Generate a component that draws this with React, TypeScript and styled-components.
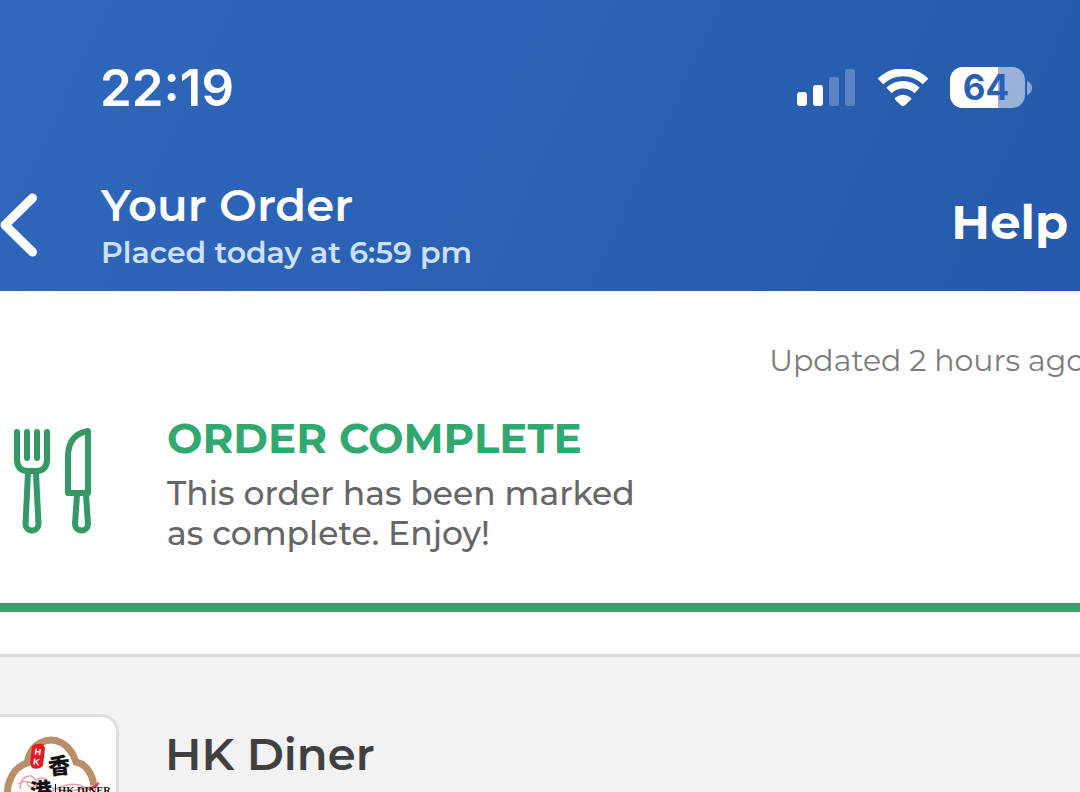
import React from "react";
import styled, { createGlobalStyle } from "styled-components";

const GlobalStyle = createGlobalStyle`
  * { box-sizing: border-box; }
  html, body { margin: 0; padding: 0; }
  body { font-family: Montserrat, Inter, "Noto Sans", sans-serif; background: #f2f2f2; }
  h1, h2, p { margin: 0; }
`;

const Screen = styled.div`
  display: flex;
  flex-direction: column;
  height: 100vh;
  overflow: hidden;
`;

const Header = styled.header`
  flex: none;
  color: #fff;
  background: linear-gradient(115deg, #2f67bc 0%, #2a61b3 50%, #265aaa 100%);
`;

const StatusBar = styled.div`
  display: flex;
  align-items: center;
  justify-content: space-between;
  height: 176px;
  padding: 0 48px 0 100px;
`;

const Clock = styled.time`
  font: 600 51px/60px Inter, sans-serif;
`;

const StatusIcons = styled.div`
  display: flex;
  align-items: center;
  gap: 22px;
`;

const NavBar = styled.nav`
  display: flex;
  align-items: flex-start;
  height: 115px;
  padding: 4px 12px 0 0;
`;

const BackButton = styled.button`
  width: 101px;
  height: 90px;
  padding: 0;
  border: 0;
  background: none;
  text-align: left;
  cursor: pointer;
  svg { display: block; }
`;

const Titles = styled.div`
  flex: 1;
  white-space: nowrap;
`;

const Title = styled.h1`
  font-size: 45px;
  font-weight: 600;
  line-height: 50px;
`;

const Placed = styled.p`
  font-size: 30px;
  font-weight: 600;
  line-height: 46px;
  color: #cfe0fc;
`;

const HelpButton = styled.button`
  padding: 12px 0;
  border: 0;
  background: none;
  color: #fff;
  font: inherit;
  font-size: 48px;
  font-weight: 700;
  line-height: 60px;
  cursor: pointer;
`;

const Content = styled.main`
  display: flex;
  flex: 1;
  flex-direction: column;
  min-height: 0;
`;

const Status = styled.section`
  flex: none;
  padding: 50px 0;
  background: #fff;
  border-bottom: 9px solid #31a86f;
`;

const Updated = styled.p`
  margin-right: -5px;
  text-align: right;
  font-size: 30px;
  font-weight: 400;
  line-height: 40px;
  white-space: nowrap;
  color: #7c7c7c;
`;

const StatusRow = styled.div`
  display: flex;
  align-items: center;
  margin-top: 28px;
`;

const IconColumn = styled.div`
  flex: none;
  width: 167px;
  svg { display: block; }
`;

const StatusTitle = styled.h2`
  font-size: 42px;
  font-weight: 700;
  line-height: 58px;
  color: #31a86f;
`;

const StatusText = styled.p`
  margin-top: 6px;
  font-size: 33px;
  font-weight: 500;
  line-height: 40px;
  color: #666;
`;

const Spacer = styled.div`
  flex: none;
  height: 42px;
  background: #fff;
`;

const Restaurant = styled.section`
  display: flex;
  flex: 1;
  align-items: flex-start;
  min-height: 0;
  padding-top: 57px;
  border-top: 3px solid #dadada;
  background: #f2f2f2;
`;

const LogoCard = styled.div`
  flex: none;
  width: 119px;
  height: 160px;
  border: 3px solid #dedede;
  border-left: 0;
  border-radius: 0 18px 18px 0;
  background: #fff;
  overflow: hidden;
  svg { display: block; }
`;

const RestaurantName = styled.h2`
  padding: 12px 0 0 46px;
  font-size: 45px;
  font-weight: 600;
  line-height: 56px;
  color: #404040;
`;

const SignalIcon = () => (
  <svg width="59" height="40" viewBox="0 0 59 40" fill="#fff" aria-label="Signal">
    <rect x="0" y="24" width="10" height="14" rx="3" />
    <rect x="16" y="17" width="10" height="21" rx="3" />
    <rect x="32" y="9" width="10" height="29" rx="3" opacity=".24" />
    <rect x="48" y="1" width="10" height="37" rx="3" opacity=".24" />
  </svg>
);

const WifiIcon = () => (
  <svg width="50" height="38" viewBox="0 0 50 38" fill="none" aria-label="Wi-Fi">
    <path d="M2.500 12.500 A32 32 0 0 1 47.500 12.500" stroke="#fff" strokeWidth="8" />
    <path d="M11 21.500 A20 20 0 0 1 39 21.500" stroke="#fff" strokeWidth="7.500" />
    <path d="M25 37.500 Q24 37.500 17 30.500 Q16 29.500 17.500 28.500 Q25 23 32.500 28.500 Q34 29.500 33 30.500 Q26 37.500 25 37.500Z" fill="#fff" />
  </svg>
);

const BatteryIcon = () => (
  <svg width="82" height="42" viewBox="0 0 82 42" aria-label="Battery">
    <defs>
      <clipPath id="charge"><rect width="48" height="42" /></clipPath>
    </defs>
    <rect width="75" height="41" rx="13" fill="#9ab2da" />
    <rect width="75" height="41" rx="13" fill="#fff" clipPath="url(#charge)" />
    <path d="M77 14 Q82 16 82 21 Q82 26 77 28Z" fill="#8fa9d6" />
    <text x="36" y="33" textAnchor="middle" fontFamily="Inter, sans-serif" fontSize="35" fontWeight="700" fill="#2a5fb3">64</text>
  </svg>
);

const BackIcon = () => (
  <svg width="42" height="90" viewBox="0 0 42 90" fill="none">
    <path d="M32.500 18 L5 45 L32.500 72" stroke="#fff" strokeWidth="9" strokeLinecap="round" strokeLinejoin="round" />
  </svg>
);

const CutleryIcon = () => (
  <svg width="96" height="110" viewBox="0 0 96 110" fill="none" stroke="#359966" strokeWidth="6" strokeLinecap="round" strokeLinejoin="round">
    <path d="M17 6 V33 Q17 45 28 45 H36 Q47 45 47 33 V6" />
    <path d="M27 6 V32 M37 6 V32" />
    <path d="M28 47 L25.500 98 A6.500 6.500 0 0 0 38.500 98 L36 47" />
    <path d="M88 5 V67 H68 V29 Q69 8 88 5Z" />
    <path d="M77 69 L75 98 A6.500 6.500 0 0 0 88 98 L86 69" />
  </svg>
);

const DinerLogo = () => (
  <svg width="116" height="154" viewBox="0 0 116 154" fill="none" aria-label="HK Diner logo">
    <path d="M12 88 Q4 77 10 63 Q15 50 27 46 Q30 31 40 26 Q51 20 62 26 Q72 32 76 45 Q90 48 94 68" stroke="#b98f6b" strokeWidth="7" />
    <path d="M32 29 Q36 26 43 27 L45 31 L43 49 Q39 53 32 51 L30 47Z" fill="#e51b23" />
    <g transform="rotate(8 37 39)" fill="#fff" fontFamily="Liberation Sans, sans-serif" fontSize="9" fontWeight="700">
      <text x="34" y="38">H</text>
      <text x="34" y="48">K</text>
    </g>
    <path d="M20 72 Q21 58 31 59 Q38 62 34 69 Q28 72 27 65 M35 64 Q43 58 47 64 M18 67 Q28 60 40 72 M52 74 Q72 62 86 71 Q92 73 99 65 M52 71 Q70 78 99 67 M54 77 Q76 83 94 69" stroke="#e6a2aa" strokeWidth="1.500" />
    <path d="M88 72 L99 65 L98 69 L90 74" fill="#d8434e" />
    <g fill="#111" fontFamily="Noto Sans CJK TC, sans-serif" fontWeight="900">
      <text x="48" y="57" fontSize="22" transform="rotate(-6 59 48)">香</text>
      <text x="30" y="82" fontSize="22" transform="rotate(-6 41 74)">港</text>
    </g>
    <path d="M55.500 67 V82" stroke="#111" />
    <text x="58" y="77" fill="#111" fontFamily="Liberation Serif, serif" fontSize="10.500" fontWeight="700">HK DINER</text>
  </svg>
);

export default function App() {
  return (
    <>
      <GlobalStyle />
      <Screen>
        <Header>
          <StatusBar>
            <Clock>22:19</Clock>
            <StatusIcons>
              <SignalIcon />
              <WifiIcon />
              <BatteryIcon />
            </StatusIcons>
          </StatusBar>
          <NavBar>
            <BackButton aria-label="Back"><BackIcon /></BackButton>
            <Titles>
              <Title>Your Order</Title>
              <Placed>Placed today at 6:59 pm</Placed>
            </Titles>
            <HelpButton>Help</HelpButton>
          </NavBar>
        </Header>
        <Content>
          <Status>
            <Updated>Updated 2 hours ago</Updated>
            <StatusRow>
              <IconColumn><CutleryIcon /></IconColumn>
              <div>
                <StatusTitle>ORDER COMPLETE</StatusTitle>
                <StatusText>This order has been marked<br />as complete. Enjoy!</StatusText>
              </div>
            </StatusRow>
          </Status>
          <Spacer />
          <Restaurant>
            <LogoCard><DinerLogo /></LogoCard>
            <RestaurantName>HK Diner</RestaurantName>
          </Restaurant>
        </Content>
      </Screen>
    </>
  );
}
